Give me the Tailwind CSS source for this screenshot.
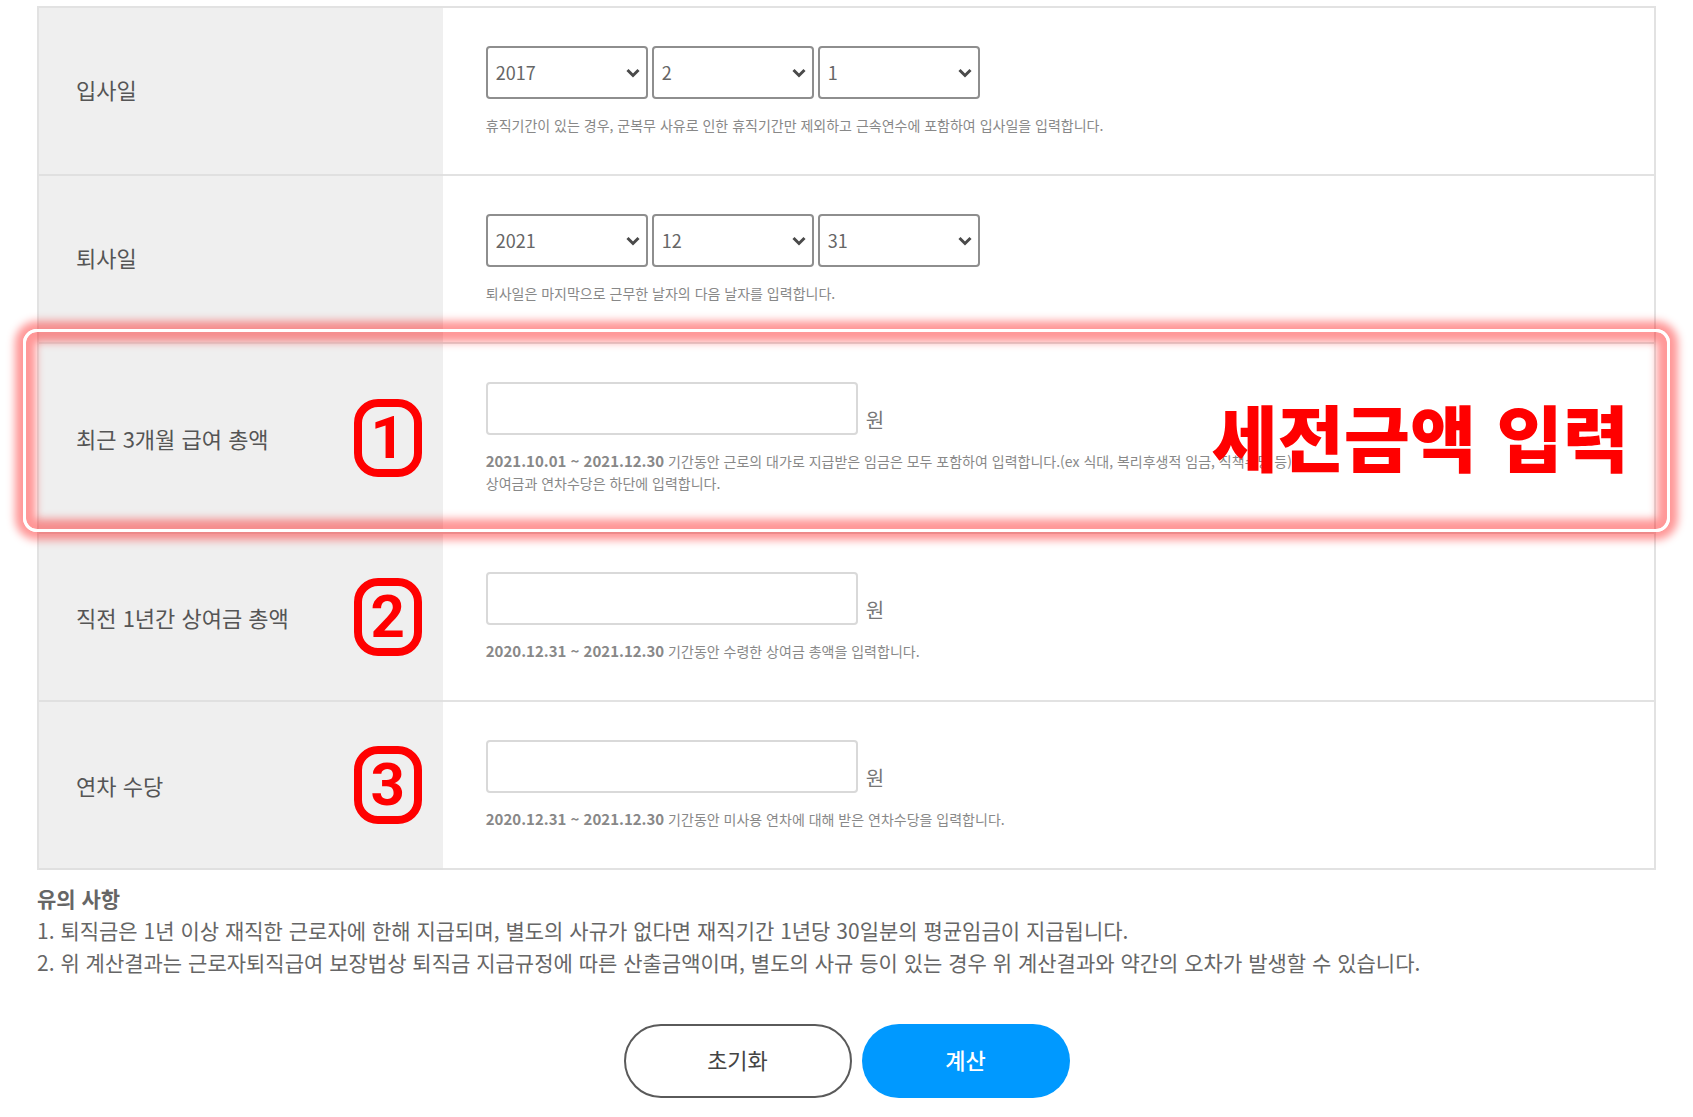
<!DOCTYPE html>
<html lang="ko">
<head>
  <meta charset="UTF-8" />
  <meta name="viewport" content="width=device-width, initial-scale=1.0" />
  <title>퇴직금 계산기</title>
  <script src="https://cdn.jsdelivr.net/npm/@tailwindcss/browser@4"></script>
</head>
<body class="bg-white px-[37px] pt-[6px] pb-4 font-['Noto_Sans_CJK_KR',sans-serif] text-[22px] text-[#555]">

  <form>
    <table class="w-full border-separate border-spacing-0 border-2 border-b-0 border-[#e2e2e2]">
      <tbody>
        <tr>
          <th scope="row" class="w-1/4 bg-[#efefef] border-b-2 border-[#e0e0e0] pl-[37px] pb-[3px] text-left font-normal">
            <label for="inYear">입사일</label>
          </th>
          <td class="border-b-2 border-[#e2e2e2] pl-[43px] py-[38px]">
            <div class="flex gap-1">
              <div class="relative">
                <select id="inYear" class="appearance-none w-[162px] h-[53px] pl-2 pb-[2px] bg-white border-2 border-[#8e8e8e] rounded-[4px] text-lg text-[#666]">
                  <option>2017</option>
                </select>
                <svg class="absolute right-2 top-[22px] w-[14px] h-[10px] pointer-events-none" viewBox="0 0 14 10" fill="none" stroke="#4a4a4a" stroke-width="3"><path d="M1.5 2 7 7.500l5.500-5.500" /></svg>
              </div>
              <div class="relative">
                <select aria-label="입사 월" class="appearance-none w-[162px] h-[53px] pl-2 pb-[2px] bg-white border-2 border-[#8e8e8e] rounded-[4px] text-lg text-[#666]">
                  <option>2</option>
                </select>
                <svg class="absolute right-2 top-[22px] w-[14px] h-[10px] pointer-events-none" viewBox="0 0 14 10" fill="none" stroke="#4a4a4a" stroke-width="3"><path d="M1.5 2 7 7.500l5.500-5.500" /></svg>
              </div>
              <div class="relative">
                <select aria-label="입사 일" class="appearance-none w-[162px] h-[53px] pl-2 pb-[2px] bg-white border-2 border-[#8e8e8e] rounded-[4px] text-lg text-[#666]">
                  <option>1</option>
                </select>
                <svg class="absolute right-2 top-[22px] w-[14px] h-[10px] pointer-events-none" viewBox="0 0 14 10" fill="none" stroke="#4a4a4a" stroke-width="3"><path d="M1.5 2 7 7.500l5.500-5.500" /></svg>
              </div>
            </div>
            <p class="mt-[15px] text-sm leading-[22px] text-[#888]">휴직기간이 있는 경우, 군복무 사유로 인한 휴직기간만 제외하고 근속연수에 포함하여 입사일을 입력합니다.</p>
          </td>
        </tr>

        <tr>
          <th scope="row" class="bg-[#efefef] border-b-2 border-[#e0e0e0] pl-[37px] pb-[3px] text-left font-normal">
            <label for="outYear">퇴사일</label>
          </th>
          <td class="border-b-2 border-[#e2e2e2] pl-[43px] py-[38px]">
            <div class="flex gap-1">
              <div class="relative">
                <select id="outYear" class="appearance-none w-[162px] h-[53px] pl-2 pb-[2px] bg-white border-2 border-[#8e8e8e] rounded-[4px] text-lg text-[#666]">
                  <option>2021</option>
                </select>
                <svg class="absolute right-2 top-[22px] w-[14px] h-[10px] pointer-events-none" viewBox="0 0 14 10" fill="none" stroke="#4a4a4a" stroke-width="3"><path d="M1.5 2 7 7.500l5.500-5.500" /></svg>
              </div>
              <div class="relative">
                <select aria-label="퇴사 월" class="appearance-none w-[162px] h-[53px] pl-2 pb-[2px] bg-white border-2 border-[#8e8e8e] rounded-[4px] text-lg text-[#666]">
                  <option>12</option>
                </select>
                <svg class="absolute right-2 top-[22px] w-[14px] h-[10px] pointer-events-none" viewBox="0 0 14 10" fill="none" stroke="#4a4a4a" stroke-width="3"><path d="M1.5 2 7 7.500l5.500-5.500" /></svg>
              </div>
              <div class="relative">
                <select aria-label="퇴사 일" class="appearance-none w-[162px] h-[53px] pl-2 pb-[2px] bg-white border-2 border-[#8e8e8e] rounded-[4px] text-lg text-[#666]">
                  <option>31</option>
                </select>
                <svg class="absolute right-2 top-[22px] w-[14px] h-[10px] pointer-events-none" viewBox="0 0 14 10" fill="none" stroke="#4a4a4a" stroke-width="3"><path d="M1.5 2 7 7.500l5.500-5.500" /></svg>
              </div>
            </div>
            <p class="mt-[15px] text-sm leading-[22px] text-[#888]">퇴사일은 마지막으로 근무한 날자의 다음 날자를 입력합니다.</p>
          </td>
        </tr>

        <tr class="relative">
          <th scope="row" class="bg-[#efefef] border-b-2 border-[#e0e0e0] pl-[37px] pr-[21px] text-left font-normal">
            <div class="flex items-center justify-between">
              <label for="salary">최근 3개월 급여 총액</label>
              <span class="flex items-center justify-center w-[68px] h-[78px] border-8 border-[#f00] rounded-[24px] font-[Roboto,sans-serif] text-[60px] leading-none font-bold text-[#f00]">1</span>
            </div>
          </th>
          <td class="border-b-2 border-[#e2e2e2] pl-[43px] py-[38px]">
            <div class="flex items-end gap-2">
              <input id="salary" type="text" class="w-[372px] h-[53px] px-3 bg-white border-2 border-[#d9d9d9] rounded-[4px] text-lg" />
              <span class="text-xl leading-[30px] text-[#777]">원</span>
            </div>
            <p class="mt-[15px] text-sm leading-[22px] text-[#888]"><strong class="text-[15px] leading-none font-bold">2021.10.01 ~ 2021.12.30</strong> 기간동안 근로의 대가로 지급받은 임금은 모두 포함하여 입력합니다.(ex 식대, 복리후생적 임금, 직책수당 등)<br />상여금과 연차수당은 하단에 입력합니다.</p>
            <!-- 강조 테두리 -->
            <div class="absolute -left-4 -right-4 -top-[15px] bottom-[2px] flex items-center justify-end pt-2 pr-[38px] border-[3px] border-white rounded-[14px] shadow-[0_0_8px_8px_rgba(255,0,0,0.41),inset_0_0_8px_10px_rgba(255,0,0,0.41)] pointer-events-none">
              <span class="text-[72px] leading-none font-black text-[#f00]">세전금액 입력</span>
            </div>
          </td>
        </tr>

        <tr>
          <th scope="row" class="bg-[#efefef] border-b-2 border-[#e0e0e0] pl-[37px] pr-[21px] text-left font-normal">
            <div class="flex items-center justify-between">
              <label for="bonus">직전 1년간 상여금 총액</label>
              <span class="flex items-center justify-center w-[68px] h-[78px] border-8 border-[#f00] rounded-[24px] font-[Roboto,sans-serif] text-[60px] leading-none font-bold text-[#f00]">2</span>
            </div>
          </th>
          <td class="border-b-2 border-[#e2e2e2] pl-[43px] py-[38px]">
            <div class="flex items-end gap-2">
              <input id="bonus" type="text" class="w-[372px] h-[53px] px-3 bg-white border-2 border-[#d9d9d9] rounded-[4px] text-lg" />
              <span class="text-xl leading-[30px] text-[#777]">원</span>
            </div>
            <p class="mt-[15px] text-sm leading-[22px] text-[#888]"><strong class="text-[15px] leading-none font-bold">2020.12.31 ~ 2021.12.30</strong> 기간동안 수령한 상여금 총액을 입력합니다.</p>
          </td>
        </tr>

        <tr>
          <th scope="row" class="bg-[#efefef] border-b-2 border-[#e0e0e0] pl-[37px] pr-[21px] text-left font-normal">
            <div class="flex items-center justify-between">
              <label for="leave">연차 수당</label>
              <span class="flex items-center justify-center w-[68px] h-[78px] border-8 border-[#f00] rounded-[24px] font-[Roboto,sans-serif] text-[60px] leading-none font-bold text-[#f00]">3</span>
            </div>
          </th>
          <td class="border-b-2 border-[#e2e2e2] pl-[43px] py-[38px]">
            <div class="flex items-end gap-2">
              <input id="leave" type="text" class="w-[372px] h-[53px] px-3 bg-white border-2 border-[#d9d9d9] rounded-[4px] text-lg" />
              <span class="text-xl leading-[30px] text-[#777]">원</span>
            </div>
            <p class="mt-[15px] text-sm leading-[22px] text-[#888]"><strong class="text-[15px] leading-none font-bold">2020.12.31 ~ 2021.12.30</strong> 기간동안 미사용 연차에 대해 받은 연차수당을 입력합니다.</p>
          </td>
        </tr>
      </tbody>
    </table>

    <div class="mt-3 text-[21px] leading-8 text-[#666]">
      <h2 class="font-bold">유의 사항</h2>
      <p>1. 퇴직금은 1년 이상 재직한 근로자에 한해 지급되며, 별도의 사규가 없다면 재직기간 1년당 30일분의 평균임금이 지급됩니다.</p>
      <p>2. 위 계산결과는 근로자퇴직급여 보장법상 퇴직금 지급규정에 따른 산출금액이며, 별도의 사규 등이 있는 경우 위 계산결과와 약간의 오차가 발생할 수 있습니다.</p>
    </div>

    <div class="mt-[46px] flex justify-center gap-[10px]">
      <button type="reset" class="w-[228px] h-[74px] pb-1 bg-white border-2 border-[#5a5a5a] rounded-full text-[#444]">초기화</button>
      <button type="button" class="w-[208px] h-[74px] pb-1 bg-[#09f] rounded-full font-medium text-white">계산</button>
    </div>
  </form>

</body>
</html>
